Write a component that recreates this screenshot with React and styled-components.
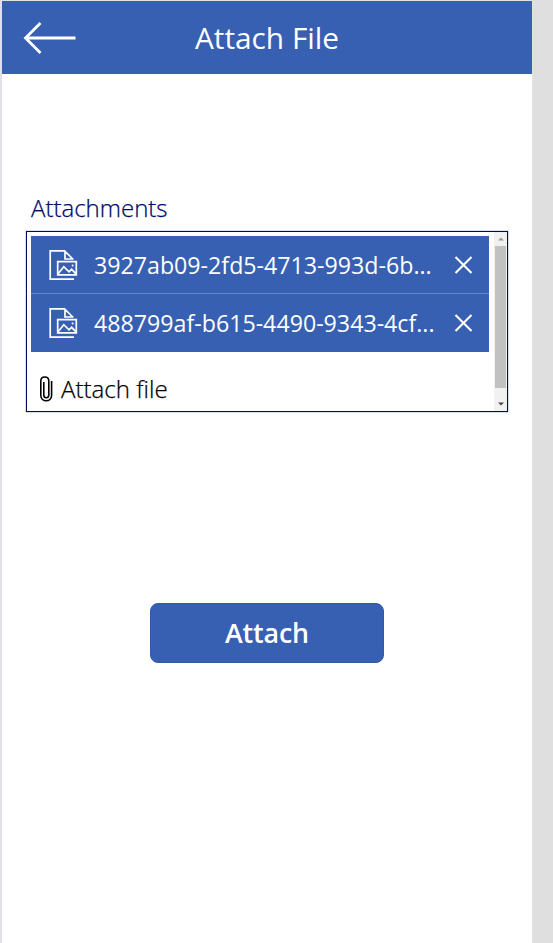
import React from "react";
import styled, { createGlobalStyle } from "styled-components";

const blue = "#3860b2";
const navy = "#000f5c";

const GlobalStyle = createGlobalStyle`
  * { box-sizing: border-box; }
  body { margin: 0; background: #dfdfdf; font-family: "Open Sans", "Noto Sans", sans-serif; }
  button { font: inherit; color: inherit; background: none; border: 0; padding: 0; }
`;

const Screen = styled.main`
  display: flex;
  flex-direction: column;
  width: 533px;
  height: 943px;
  background: #fff;
  border: solid #dfe1e6;
  border-width: 1px 1px 0 2px;
`;

const Header = styled.header`
  display: grid;
  grid-template-columns: 73px 1fr 73px;
  align-items: center;
  height: 73px;
  flex: none;
  background: ${blue};
  color: #fff;
`;

const IconButton = styled.button`
  display: flex;
  align-items: center;
  justify-content: center;
  flex: none;
  width: ${(p) => p.$width}px;
  height: 100%;
  padding-left: ${(p) => p.$inset || 0}px;
`;

const Title = styled.h1`
  margin: 0;
  font-size: 29.8px;
  font-weight: 400;
  line-height: 40px;
  text-align: center;
`;

const Field = styled.section`
  display: flex;
  flex-direction: column;
  margin: 118px 24px 0 24px;
`;

const Label = styled.h2`
  margin: 0;
  padding-left: 5px;
  height: 39px;
  color: #000b68;
  font-size: 24px;
  font-weight: 300;
  line-height: 32px;
  -webkit-text-stroke: 0.25px currentColor;
`;

const AttachmentBox = styled.div`
  display: flex;
  justify-content: space-between;
  width: 482px;
  height: 181px;
  border: 1px solid ${navy};
  box-shadow: 0 0 0 0.5px #b4bbdc;
`;

const Content = styled.div`
  width: 462px;
  padding: 4px 0 0 4px;
`;

const FileList = styled.ul`
  list-style: none;
  margin: 0;
  padding: 0;
`;

const FileRow = styled.li`
  display: flex;
  align-items: center;
  height: 57px;
  padding-left: 18px;
  background: ${blue};
  color: #fff;
  & + & {
    height: 59px;
    padding-bottom: 1px;
    border-top: 1px solid #6588c9;
  }
`;

const FileName = styled.span`
  flex: 1;
  margin-left: 16px;
  padding-top: 1px;
  font-size: 23.2px;
  line-height: 32px;
  white-space: nowrap;
`;

const AddFile = styled.button`
  display: flex;
  align-items: center;
  gap: 8px;
  margin: 21px 0 0 9px;
  color: #000;
  font-size: 24.1px;
  font-weight: 300;
  line-height: 32px;
  -webkit-text-stroke: 0.25px currentColor;
`;

const ScrollTrack = styled.div`
  display: flex;
  flex-direction: column;
  align-items: center;
  width: 13px;
  background: #f1f1f1;
`;

const ScrollArrow = styled.div`
  display: flex;
  align-items: center;
  justify-content: center;
  height: 14px;
`;

const ScrollThumb = styled.div`
  width: 11px;
  height: 142px;
  margin-bottom: 9px;
  background: #c1c1c1;
`;

const SubmitButton = styled.button`
  align-self: center;
  width: 234px;
  height: 60px;
  margin-top: 191px;
  border-radius: 8px;
  background: ${blue};
  border: 1px solid #315aa9;
  color: #fff;
  font-size: 26.8px;
  font-weight: 600;
  line-height: 36px;
  letter-spacing: -0.15px;
`;

const BackIcon = () => (
  <svg width="53" height="34" viewBox="0 0 53 34" fill="none" stroke="#fff" strokeWidth="2.8">
    <path d="M17.5 2 2.5 17l15 15M2.5 17h50" />
  </svg>
);

const ImageFileIcon = () => (
  <svg width="29" height="33" viewBox="0 0 29 33" fill="none" stroke="#fff" strokeWidth="1.7">
    <path d="M25 31.2H1.2V2.8h14.3L23.8 11M16 2.8V11h8.5M8.7 13.7h18.6v13.2H8.7zM9.3 25.5l5.5-6.8 5.2 5.2 2.6-2.6 4.2 4.4" />
    <circle cx="23.6" cy="17.4" r="1" fill="#fff" stroke="none" />
  </svg>
);

const CloseIcon = () => (
  <svg width="19" height="18" viewBox="0 0 19 18" fill="none" stroke="#fff" strokeWidth="2.1">
    <path d="m1.5 1 16 16M17.5 1l-16 16" />
  </svg>
);

const ClipIcon = () => (
  <svg width="13" height="26" viewBox="0 0 13 26" fill="none" stroke="#000" strokeWidth="1.6">
    <path d="M11.6 5v14.2c0 7.3-10.8 7.3-10.8 0V5c0-5.3 8-5.3 8 0v14c0 3.6-5 3.6-5 0V6" />
  </svg>
);

const Arrow = ({ down }) => (
  <svg width="6" height="4" viewBox="0 0 6 4">
    <path d={down ? "M0 .5h6l-3 3z" : "M0 3.5h6l-3-3z"} fill={down ? "#444" : "#999"} />
  </svg>
);

const files = ["3927ab09-2fd5-4713-993d-6b...", "488799af-b615-4490-9343-4cf..."];

export default function App() {
  return (
    <>
      <GlobalStyle />
      <Screen>
        <Header>
          <IconButton $width={75} $inset={20} aria-label="Back"><BackIcon /></IconButton>
          <Title>Attach File</Title>
        </Header>
        <Field>
          <Label>Attachments</Label>
          <AttachmentBox>
            <Content>
              <FileList>
                {files.map((name) => (
                  <FileRow key={name}>
                    <ImageFileIcon />
                    <FileName>{name}</FileName>
                    <IconButton $width={51} aria-label="Remove"><CloseIcon /></IconButton>
                  </FileRow>
                ))}
              </FileList>
              <AddFile><ClipIcon />Attach file</AddFile>
            </Content>
            <ScrollTrack>
              <ScrollArrow><Arrow /></ScrollArrow>
              <ScrollThumb />
              <ScrollArrow><Arrow down /></ScrollArrow>
            </ScrollTrack>
          </AttachmentBox>
        </Field>
        <SubmitButton>Attach</SubmitButton>
      </Screen>
    </>
  );
}
